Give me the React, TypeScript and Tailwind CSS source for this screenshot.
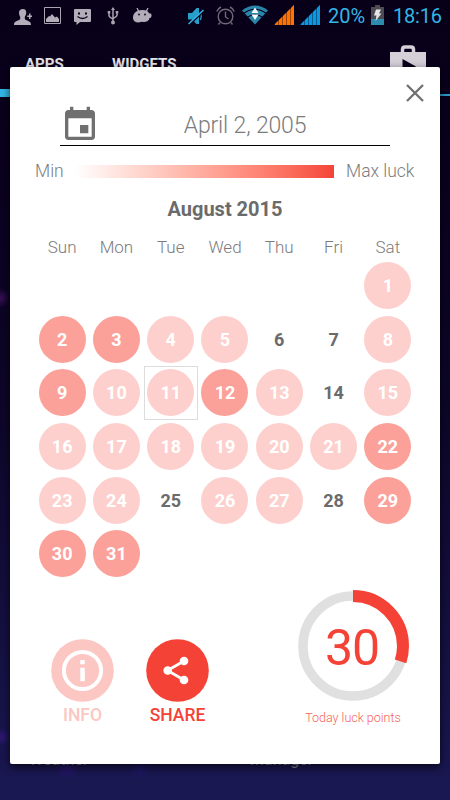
import type { ReactNode } from "react";
import clsx from "clsx";

type Luck = 0 | 1 | 2;

const WEEKDAYS = ["Sun", "Mon", "Tue", "Wed", "Thu", "Fri", "Sat"];
const FIRST_WEEKDAY = 6;
const TODAY = 11;

// luck level for each day of the month, 0 = none, 2 = high
const LUCK: Luck[] = [
  1,
  2, 2, 1, 1, 0, 0, 1,
  2, 1, 1, 2, 1, 0, 1,
  1, 1, 1, 1, 1, 1, 2,
  1, 1, 0, 1, 1, 0, 2,
  2, 2,
];

function StatusBar() {
  return (
    <div className="flex h-8 items-start pt-[5px] text-[#33b5e5]">
      <svg className="ml-3.5 mt-1 h-4 w-[18px]" viewBox="0 0 18 16" fill="#b3adba">
        <path d="M9 0c2.200 0 3.400 1.500 3.200 3.800-.1 1.900-.7 3-1.400 3.900v2.100c0 .8 1 1.200 3 2 2 .8 3.200 1.600 3.200 4.200H0c0-2.600 1-3.400 3.200-4.200 2-.8 3-1.200 3-2V7.700C5.500 6.800 5.100 5.700 5 3.800 4.900 1.500 6.500 0 9 0z" />
        <path d="M15 4.500h1.500v2H18.300V8h-1.800v2H15V8h-1.800V6.500H15z" />
      </svg>
      <svg className="ml-3 mt-0.5 h-[17px] w-[17px]" viewBox="0 0 17 17">
        <path d="M.5.5h16v16H.5z" fill="none" stroke="#a9a3b0" />
        <path d="M2 15v-3l3-3 1 .5L8 7l3 3.500 2-1 2 2.500v3z" fill="#b3adba" />
      </svg>
      <svg className="ml-[13px] mt-1 h-4 w-[17px]" viewBox="0 0 17 16">
        <path d="M1 0h15q1 0 1 1v11q0 1-1 1H6l-3.500 3V13H1q-1 0-1-1V1q0-1 1-1z" fill="#b3adba" />
        <path d="M4 3.500h2v2H4zM11 3.500h2v2h-2z" fill="#0a001c" />
        <path d="M3.500 7.500q5 4 10 0" fill="none" stroke="#0a001c" strokeWidth="1.300" />
      </svg>
      <svg className="ml-4 mt-0.5 h-[18px] w-3" viewBox="0 0 12 18" stroke="#a9a3b0" fill="none" strokeWidth="1.500">
        <path d="M6 2v13M2 5v3.500q0 1.500 4 3.500M10 6v2q0 1.500-4 3.500" />
        <path d="M6 0l2 3H4z" fill="#a9a3b0" stroke="none" />
        <path d="M.7 4h2.600v2.600H.7zM8.700 4h2.600v2.600H8.700z" fill="#a9a3b0" stroke="none" />
        <circle cx="6" cy="15.500" r="2" fill="#a9a3b0" stroke="none" />
      </svg>
      <svg className="ml-3.5 mt-[3px] h-[15px] w-[19px]" viewBox="0 0 19 15">
        <path d="M4 0l2 4M15 0l-2 4" stroke="#b3adba" strokeWidth="1.300" />
        <path d="M9.500 2c4 0 6 1.500 6.500 3.500 1.500-.5 2.800.5 2.500 2.500-.3 1.500-1 2-2 2C16 13 13.500 14 10 14c-1 0-1.500-.5-2 0-3 1-7.500.5-8-3.500C-.3 6 2.500 2 9.500 2z" fill="#b3adba" />
        <circle cx="6" cy="6.500" r=".9" fill="#0a001c" />
        <circle cx="12" cy="6.500" r=".9" fill="#0a001c" />
      </svg>
      <svg className="ml-9 mt-0.5 h-[18px] w-4" viewBox="0 0 16 18">
        <path d="M0 6h4l4.500-5H11v16H8.500L4 12.500H0z" fill="#279fcb" />
        <path d="M12.500 5q1.500 4 0 8" stroke="#279fcb" strokeWidth="1.300" fill="none" />
        <path d="M1.500 18L16 4" stroke="#0a001c" strokeWidth="1.500" />
        <path d="M.5 17L15.500 3" stroke="#33b5e5" strokeWidth="1.500" />
      </svg>
      <svg className="ml-3 mt-px h-[19px] w-[19px]" viewBox="0 0 19 19" fill="none" stroke="#6f6a78" strokeWidth="1.400">
        <circle cx="9.500" cy="10.500" r="7.300" />
        <path d="M9.500 5.500v5.500l3 2M.8 5.500q1-3 4.200-4.500M18.200 5.500q-1-3-4.200-4.500M4 16.500L2.500 18.500M15 16.500l1.500 2" />
      </svg>
      <svg className="ml-[7px] h-5 w-[26px]" viewBox="0 0 26 20">
        <path d="M0 5.500Q13-4.500 26 5.500L13 19.500z" fill="#2a86a8" />
        <path d="M2 8.300q11-8 22 0M5.500 12.300q7.500-5.500 15 0" fill="none" stroke="#0a001c" strokeWidth="1.100" />
        <path d="M13 2.500l3.500 5.500h-7zM13 15l-3.500-5.500h7z" fill="#fff" />
      </svg>
      <SignalBars className="ml-[6px] fill-[#ff7200]" />
      <SignalBars className="ml-[6px] fill-[#0a97e0]" />
      <span className="ml-2 w-[42px] text-[20px] leading-[23px]">20%</span>
      <svg className="ml-px h-5 w-[13px]" viewBox="0 0 13 20">
        <path d="M4 0h5v2h4v18H0V2h4z" fill="#4c4b52" />
        <path d="M0 14h13v6H0z" fill="#2d8cae" />
        <path d="M5 4.500h5L8 8.500h2.500L4.500 16l1-5.500H3z" fill="#e6e6e6" />
      </svg>
      <span className="ml-[9px] text-[20px] leading-[23px] tracking-[-0.2px]">18:16</span>
    </div>
  );
}

function SignalBars({ className }: { className: string }) {
  return (
    <svg className={clsx("h-5 w-5", className)} viewBox="0 0 20 20">
      <path d="M0 20L20 0V20z" opacity=".6" />
      <path d="M1 20v-1l3-3v4zM5 20v-5l3-3V20zM9 20v-9l3-3V20zM13 20V7l3-3v16zM17 20V3L20 0v20z" />
    </svg>
  );
}

function Launcher() {
  return (
    <div className="flex h-full flex-col justify-between bg-[radial-gradient(circle_at_0px_298px,rgba(75,20,110,0.7),transparent_10px),radial-gradient(circle_at_1px_737px,rgba(60,25,135,0.7),transparent_9px),radial-gradient(circle_at_67px_768px,rgba(45,20,125,0.6),transparent_12px),radial-gradient(circle_at_140px_768px,rgba(35,25,125,0.5),transparent_12px)]">
      <div>
        <StatusBar />
        <div className="flex h-[57px] items-start text-[15px] font-bold leading-[18px] text-[#e4e2e8]">
          <span className="ml-[25px] mt-[23px] w-[87px]">APPS</span>
          <span className="mt-[23px]">WIDGETS</span>
          <svg className="ml-auto mr-6 mt-[13px] h-9 w-9" viewBox="0 0 36 36">
            <path d="M12.500 9V4.500q0-2.500 2.500-2.500h6q2.500 0 2.500 2.500V9" fill="none" stroke="#d3d0d8" strokeWidth="3.500" />
            <path d="M0 7h36v29H0z" fill="#d3d0d8" />
            <path d="M12.500 14L26 21.500l-13.500 8z" fill="#0a001c" />
          </svg>
        </div>
        <div className="flex h-2 items-end justify-between">
          <div className="h-2 w-40 bg-[#33b5e5]" />
          <div className="mb-px h-0.5 flex-1 bg-[#2a9cc9]" />
        </div>
      </div>
      <div className="flex h-[50px] text-[16px] leading-5 text-[#8d8c96]">
        <span className="w-[221px] pl-[29px]">Weather</span>
        <span className="pl-[29px]">Manager</span>
      </div>
    </div>
  );
}

function Day({ day }: { day: number }) {
  const luck = LUCK[day - 1];
  return (
    <div
      className={clsx(
        "flex h-[53.700px] items-center justify-center",
        day === TODAY && "border border-[#dcdcdc]"
      )}
    >
      <div
        className={clsx(
          "flex h-[47px] w-[47px] shrink-0 items-center justify-center rounded-full text-[18px] font-bold",
          luck === 0 && "text-[#6b6b6b]",
          luck === 1 && "bg-[#fdd0cd] text-white",
          luck === 2 && "bg-[#fba19a] text-white"
        )}
      >
        {day}
      </div>
    </div>
  );
}

function RoundButton({ label, className, children }: { label: string; className: string; children: ReactNode }) {
  return (
    <button type="button" className={clsx("flex w-[95px] flex-col items-center text-[17.500px] font-medium", className)}>
      <svg className="h-[63px] w-[63px]" viewBox="0 0 63 63">
        <circle cx="31.500" cy="31.500" r="31.300" fill="currentColor" />
        {children}
      </svg>
      <span className="mt-[3px] leading-5">{label}</span>
    </button>
  );
}

function LuckGauge({ value }: { value: number }) {
  return (
    <div className="flex w-[114px] flex-col items-center">
      <div className="relative h-[114px] w-[114px]">
        <svg className="h-full w-full" viewBox="0 0 114 114" fill="none">
          <circle cx="57" cy="57" r="50" stroke="#e0e0e0" strokeWidth="9.500" />
          <circle
            cx="57"
            cy="57"
            r="50"
            stroke="#f44336"
            strokeWidth="12"
            pathLength="100"
            strokeDasharray={`${value} 100`}
            transform="rotate(-90 57 57)"
          />
        </svg>
        <span className="absolute inset-0 flex items-center justify-center pr-0.5 pt-1 text-[50px] leading-none tracking-[-1px] text-[#f44336]">
          {value}
        </span>
      </div>
      <span className="mt-[5px] whitespace-nowrap text-[12.500px] font-light leading-5 text-[#f6635a]">
        Today luck points
      </span>
    </div>
  );
}

function LuckDialog() {
  return (
    <div className="absolute left-2.5 top-[67px] flex h-[697px] w-[430px] flex-col rounded-[2px] bg-white shadow-[0_3px_8px_rgba(0,0,0,0.7)]">
      <button type="button" aria-label="Close" className="ml-auto mr-4 mt-[17px] h-[18px] w-[18px]">
        <svg viewBox="0 0 18 18" stroke="#707070" strokeWidth="2.300">
          <path d="M1 1l16 16M17 1L1 17" />
        </svg>
      </button>

      <div className="mx-[50px] mt-[3px] flex h-[41px] items-center border-b border-black">
        <svg className="h-10 w-10" viewBox="0 0 24 24" fill="#707070">
          <path d="M17 12h-5v5h5v-5zM16 1v2H8V1H6v2H5c-1.110 0-1.990.9-1.990 2L3 19c0 1.100.89 2 2 2h14c1.100 0 2-.9 2-2V5c0-1.100-.9-2-2-2h-1V1h-2zm3 18H5V8h14v11z" />
        </svg>
        <span className="flex-1 pt-[3px] text-center text-[23px] font-light tracking-[-0.15px] text-[#7c7c7c]">April 2, 2005</span>
      </div>

      <div className="ml-[25px] mt-[15px] flex h-5 items-center text-[17.500px] font-light text-[#7c7c7c]">
        <span className="w-10">Min</span>
        <div className="h-[13px] w-[259px] bg-linear-to-r from-white to-[#f44336]" />
        <span className="ml-3">Max luck</span>
      </div>

      <h2 className="mt-4 text-center text-[20px] font-bold leading-6 text-[#6b6b6b]">August 2015</h2>

      <div className="ml-[25px] mt-3.5 grid w-[380px] grid-cols-7 text-center text-[17px] font-light leading-6 text-[#7c7c7c]">
        {WEEKDAYS.map((name) => (
          <span key={name}>{name}</span>
        ))}
      </div>
      <div className="ml-[25px] -mt-[0.400px] grid w-[380px] grid-cols-7">
        {Array.from({ length: FIRST_WEEKDAY }, (_, i) => (
          <div key={`blank-${i}`} />
        ))}
        {LUCK.map((_, i) => (
          <Day key={i} day={i + 1} />
        ))}
      </div>

      <div className="ml-[25px] mt-[8.400px] flex">
        <div className="mt-[50px] flex">
          <RoundButton label="INFO" className="text-[#fcc6c2]">
            <circle cx="31.500" cy="31.500" r="18.600" fill="none" stroke="white" strokeWidth="4" />
            <path d="M29.300 21h4.500v4.300h-4.500zM29.300 28.700h4.500v13.500h-4.500z" fill="white" />
          </RoundButton>
          <RoundButton label="SHARE" className="text-[#f44336]">
            <path d="M38 22L21.500 31.500 38 41" fill="none" stroke="white" strokeWidth="2.800" />
            <circle cx="38" cy="22" r="4.300" fill="white" />
            <circle cx="21.700" cy="31.500" r="4.300" fill="white" />
            <circle cx="38" cy="41" r="4.300" fill="white" />
          </RoundButton>
        </div>
        <div className="ml-[71px]">
          <LuckGauge value={30} />
        </div>
      </div>
    </div>
  );
}

export default function App() {
  return (
    <div className="relative h-[800px] w-[450px] overflow-hidden bg-linear-to-b from-[#080018] via-[#0d0628] to-[#1a1853] font-['Roboto',sans-serif]">
      <Launcher />
      <LuckDialog />
    </div>
  );
}
